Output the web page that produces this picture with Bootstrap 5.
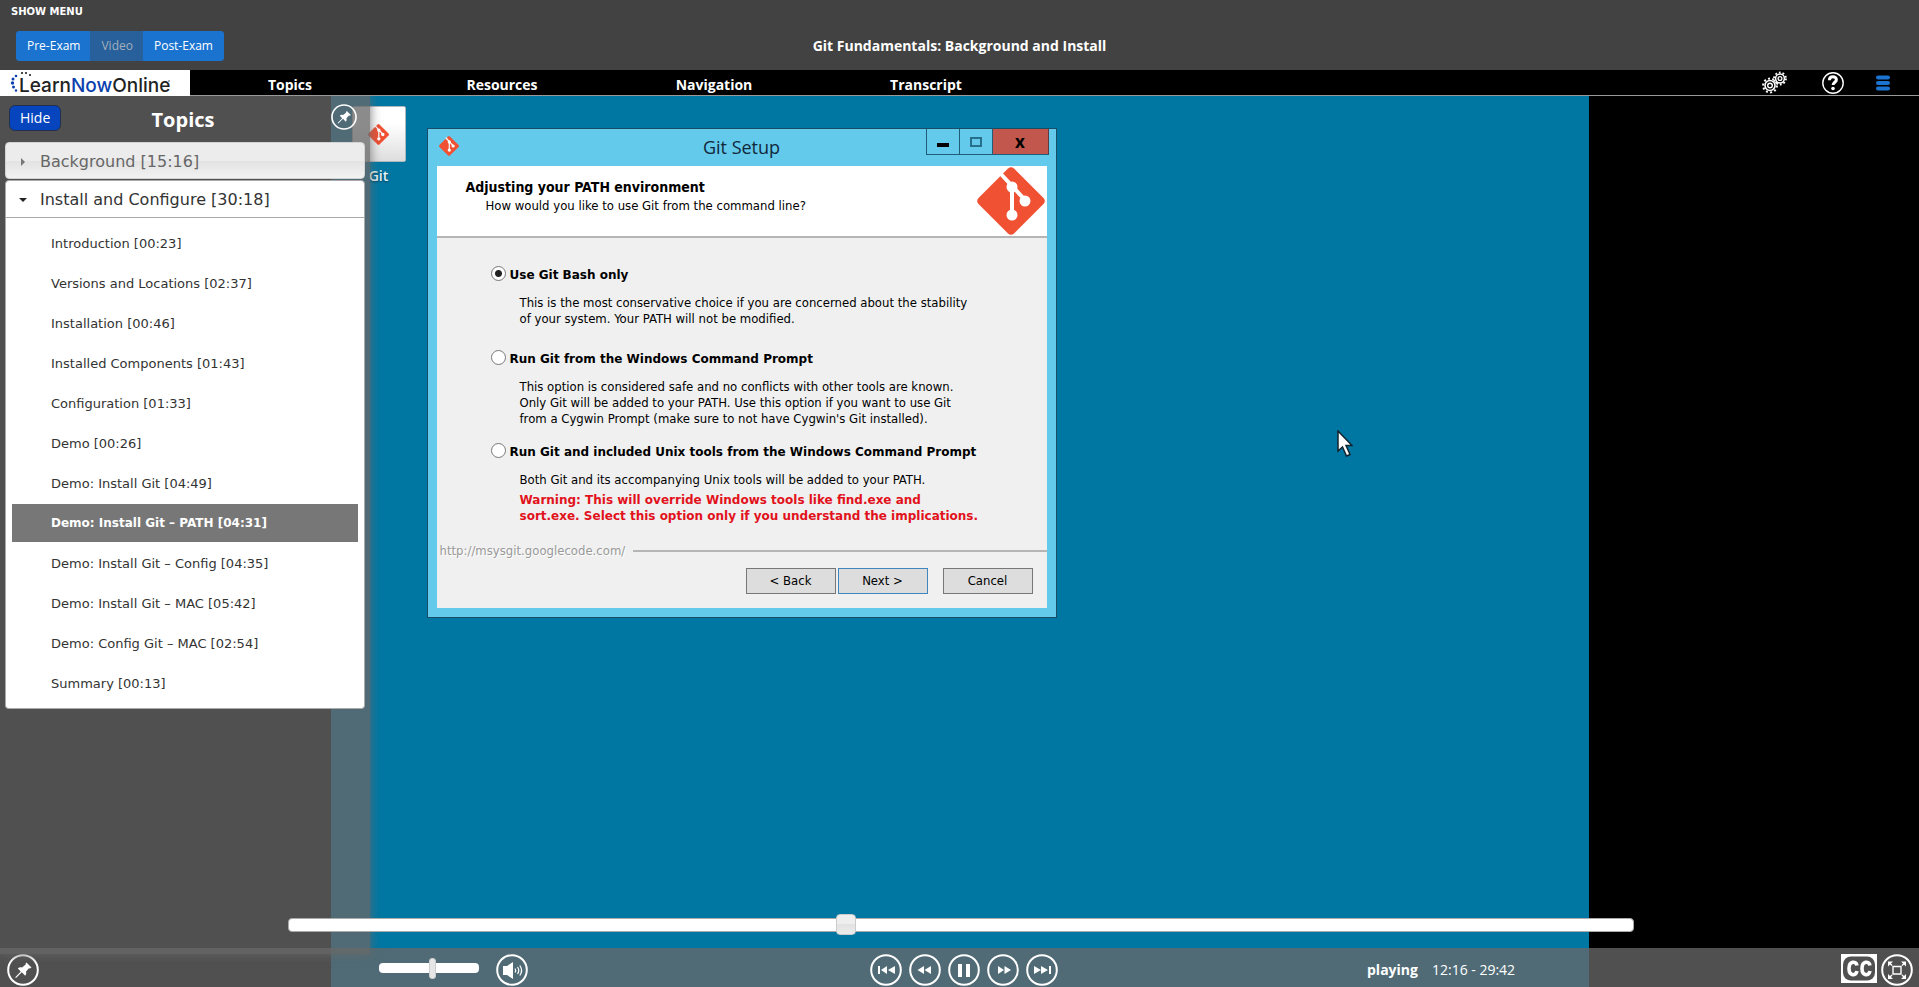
<!DOCTYPE html>
<html lang="en">
<head>
<meta charset="utf-8">
<meta name="viewport" content="width=device-width, initial-scale=1">
<title>Git Fundamentals: Background and Install</title>
<link href="https://cdn.jsdelivr.net/npm/bootstrap@5.3.0/dist/css/bootstrap.min.css" rel="stylesheet">
<style>
  body { font-family: "Open Sans", "Noto Sans", sans-serif; background: #000; color: #fff; font-size: 14px; }
  a { text-decoration: none; }
  svg { display: block; }

  /* top band */
  .top-band { background: #424242; height: 70px; flex: none; }
  .show-menu { font: bold 10px/12px "DejaVu Sans", sans-serif; color: #fff; padding: 6px 11px 0; width: fit-content; }
  .title-row { margin-top: 13px; padding: 0 16px; display: grid; grid-template-columns: 1fr auto 1fr; }
  .exam-tabs .btn { --bs-btn-bg: #1a73cf; --bs-btn-border-color: #1a73cf; --bs-btn-color: #fff;
    --bs-btn-disabled-bg: #27609a; --bs-btn-disabled-border-color: #27609a; --bs-btn-disabled-color: #a3afbb; --bs-btn-disabled-opacity: 1;
    --bs-btn-padding-x: 10px; --bs-btn-padding-y: 4px; --bs-btn-font-size: 12px; --bs-btn-line-height: 20px; --bs-btn-border-radius: 3px; }
  .course-title { font-size: 14px; line-height: 30px; font-weight: 700; margin: 0; }

  /* player navigation */
  .player-nav { height: 26px; flex: none; background: #000; border-bottom: 1px solid #999; }
  .brand-box { width: 190px; height: 26px; background: #fff; flex: none; }
  .brand-name { font: 500 19px/26px "Inter", sans-serif; fill: #222; }
  .nav-tabs-row { gap: 12px; }
  .nav-tabs-row a { flex: 0 1 200px; color: #fff; font-weight: 700; font-size: 14px; line-height: 30px; text-align: center; }
  .bare { background: none; border: 0; padding: 0; color: #fff; display: block; }
  .tools { gap: 31px; margin-right: 28px; }

  /* stage */
  .desktop { width: 66%; max-width: 1258px; background: #0077a3; }
  .desk-icon { left: 21px; top: 10px; width: 54px; font-size: 14px; font-weight: 600; color: #e6f5fa; line-height: 18px; text-shadow: 0 1px 2px #033b55; }
  .desk-icon .tile { height: 56px; margin-bottom: 5px; border-radius: 2px; border: 1px solid #aeb9bd; background: linear-gradient(#fff 30%, #dedede); }

  /* setup window */
  .setup { left: 96px; top: 32px; width: 630px; background: #64caeb; border: 1px solid #174d66; padding: 0 9px 9px; color: #000;
    font: 13px/16px "DejaVu Sans Condensed", "DejaVu Sans", sans-serif; }
  .setup-bar { height: 37px; display: grid; grid-template-columns: 1fr auto 1fr; }
  .setup-bar h2 { font: 18px/36px "Open Sans", sans-serif; color: #10283a; margin: 0; }
  .setup-bar > svg { margin: 7px 0 0 2px; }
  .win-btn { height: 26px; width: 33px; border: 1px solid #1f5c78; border-top: 0; border-right: 0; background: none; padding: 0; display: flex; align-items: center; justify-content: center; color: #000; }
  .win-close { width: 57px; background: #c2584d; border-right: 1px solid #5d3b45; font: bold 17px/20px "Noto Sans", sans-serif; }
  .win-group { margin-right: -2px; }
  .setup-head { background: #fff; height: 72px; border-bottom: 2px solid #b5b5b5; padding: 1px 2px 0 29px; }
  .setup-head h3 { font-size: 14px; line-height: 16px; font-weight: 700; margin: 12px 0 3px; }
  .setup-body { background: #f0f0f0; padding: 28px 8px 0 54px; }
  .opt-label { font: bold 12px/18px "DejaVu Sans", sans-serif; }
  .setup input[type=radio] { appearance: none; width: 15px; height: 15px; border: 1px solid #777; border-radius: 50%; background: #fff; margin: 0 4px 0 0; flex: none; }
  .setup input[type=radio]:checked { background: radial-gradient(circle, #222 0 3px, #fff 4px); }
  .opt-text { margin: 11px 0 0 29px; }
  .opt { padding-bottom: 23px; }
  .opt + .opt { padding-bottom: 16px; }
  .warn { color: #e2121c; font: bold 12px/16px "DejaVu Sans", sans-serif; }
  .setup-foot { background: #f0f0f0; padding: 3px 14px 14px 3px; }
  .setup-foot .site { color: #999; text-shadow: 1px 1px 0 #fff; }
  .setup-foot .rule { height: 2px; background: #b5b5b5; margin-right: -14px; }
  .foot-actions { margin-top: 9px; }
  .setup-foot button { width: 90px; height: 26px; padding: 0; color: #000; background: #ddd; border: 1px solid #777; }
  .setup-foot button.primary { border-color: #3f86bf; margin: 0 15px 0 2px; }
  .pointer-mark { left: 1006px; top: 334px; }

  /* overlays */
  .glass { background: rgba(104, 104, 104, .77); }
  .side { left: 0; top: 0; bottom: 33px; width: 370px; padding: 0 5px; box-shadow: 0 0 10px rgba(104, 104, 104, .9); }
  .side-head { height: 46px; display: grid; grid-template-columns: 1fr auto 1fr; padding: 0 8px 0 4px; }
  .hide-btn { background: #0645be; border: 1px solid #222f4d; border-radius: 6px; color: #fff; font-size: 14px; line-height: 18px; padding: 3px 10px; margin-top: 9px; }
  .side-head h2 { font-size: 20px; line-height: 48px; font-weight: 700; margin: 0; }
  .side-list { color: #333; font-family: "DejaVu Sans", sans-serif; }
  .sec { width: 100%; border: 1px solid #aaa; border-radius: 4px; display: flex; align-items: center; text-align: left; padding: 2px 14px 0; gap: 14px; font-size: 16px; line-height: 34px; color: #333; background: #fff; }
  .sec.closed { background: linear-gradient(#ececec 50%, #e2e2e2 50%, #f2f2f2); color: #666; border-color: #d3d3d3; margin-bottom: 1px; line-height: 33px; }
  .sec.opened { border-radius: 4px 4px 0 0; }
  .sec svg { width: 6px; flex: none; }
  .chapters { background: #fff; border: 1px solid #aaa; border-top: 0; border-radius: 0 0 4px 4px; padding: 6px; display: grid; gap: 2px; }
  .chapters a { display: block; color: #333; font-size: 13px; height: 38px; line-height: 39px; padding-left: 39px; }
  .chapters a.active { background: #777; color: #fff; font-weight: 700; font-size: 12px; }

  .seek-wrap { left: 15%; width: calc(70% + 3px); bottom: 52px; height: 21px; }
  input[type=range] { appearance: none; background: none; margin: 0; display: block; }
  .seek { width: 100%; height: 21px; }
  .seek::-webkit-slider-runnable-track { height: 14px; background: #fff; border: 1px solid #aaa; border-radius: 4px; }
  .seek::-webkit-slider-thumb { appearance: none; width: 20px; height: 21px; margin-top: -5px; border: 1px solid #ccc; border-radius: 4px; background: linear-gradient(#eee 48%, #e2e2e2 50%, #ececec); }
  input.volume { width: 100px; height: 22px; margin-top: 3px; }
  .volume::-webkit-slider-runnable-track { height: 10px; background: #fff; border-radius: 4px; }
  .volume::-webkit-slider-thumb { appearance: none; width: 7px; height: 21px; margin-top: -5px; border: 1px solid #ccc; border-radius: 3px; background: #e6e6e6; }
  .controls { left: 0; right: 0; bottom: 0; height: 39px; padding: 6px 6px 0 7px; display: grid; grid-template-columns: 1fr auto 1fr; }
  .vol-group { margin-left: 340px; gap: 17px; }
  .transport { gap: 7px; margin-left: 8px; }
  .status { margin-left: 309px; gap: 14px; font-size: 14px; line-height: 32px; }
</style>
</head>
<body class="d-flex flex-column vh-100 overflow-hidden">

<svg class="d-none" aria-hidden="true">
  <symbol id="git" viewBox="0 0 68 68">
    <path fill="#f05133" d="M31 1.5a4.500 4.500 0 0 1 6 0L66.500 31a4.500 4.500 0 0 1 0 6L37 66.500a4.500 4.500 0 0 1-6 0L1.500 37a4.500 4.500 0 0 1 0-6z"/>
    <g stroke="#fff" fill="#fff" stroke-width="4"><path fill="none" d="M23 6l12 13v29M35 19l14 15"/><circle cx="35" cy="20" r="3.500"/><circle cx="35" cy="48" r="3.500"/><circle cx="48" cy="34" r="3.500"/></g>
  </symbol>
  <symbol id="pin" viewBox="0 0 32 32">
    <circle cx="16" cy="16" r="14.800" fill="none" stroke="#fff" stroke-width="2"/>
    <path fill="#fff" d="M19.500 8.500l5 5-1.500 1-1-.2-3 3.200c.5 1.800.2 3-.8 4.200l-3.400-3.400L9 24l-.8-.7 5.600-5.900-3-3c1.200-1 2.500-1.300 4.200-.8l3.700-3.200-.1-1z"/>
  </symbol>
</svg>

<header class="top-band">
  <a href="#" class="show-menu d-block">SHOW MENU</a>
  <div class="title-row">
    <div><div class="btn-group exam-tabs">
      <button class="btn" type="button">Pre-Exam</button>
      <button class="btn" type="button" disabled>Video</button>
      <button class="btn" type="button">Post-Exam</button>
    </div></div>
    <h1 class="course-title">Git Fundamentals: Background and Install</h1>
  </div>
</header>

<nav class="player-nav d-flex" aria-label="Player">
  <a href="#" class="brand-box" aria-label="LearnNowOnline">
    <svg width="190" height="26" viewBox="0 0 190 26">
      <g fill="#0b3fae"><circle cx="16" cy="6" r="1.300"/><circle cx="13" cy="9" r="1.500"/><circle cx="12.500" cy="13" r="1.700"/><circle cx="13.500" cy="17" r="1.500"/><circle cx="16" cy="20.500" r="1.200"/></g>
      <g fill="#111"><circle cx="22" cy="3" r="1"/><circle cx="26" cy="3" r="1"/><circle cx="30" cy="5" r="1"/></g>
      <text x="19" y="21.500" class="brand-name">Learn<tspan fill="#0b3fae">Now</tspan>Online</text>
      <path d="M168 11h2" stroke="#555"/>
    </svg>
  </a>
  <div class="nav-tabs-row d-flex flex-fill">
    <a href="#">Topics</a><a href="#">Resources</a><a href="#">Navigation</a><a href="#">Transcript</a>
  </div>
  <div class="tools d-flex align-items-center">
    <button class="bare me-1" type="button" aria-label="Settings">
      <svg width="25" height="23" viewBox="0 0 25 23" fill="none" stroke="#fff">
        <circle cx="8" cy="14.500" r="5" stroke-width="1.600"/><circle cx="8" cy="14.500" r="6.900" stroke-width="2" stroke-dasharray="2 2.330"/><circle cx="8" cy="14.500" r="2.300" stroke-width="1.400"/>
        <circle cx="18" cy="7.500" r="4.400" stroke-width="1.500"/><circle cx="18" cy="7.500" r="6" stroke-width="1.800" stroke-dasharray="1.800 1.970"/><circle cx="18" cy="7.500" r="1.900" stroke-width="1.300"/>
      </svg>
    </button>
    <button class="bare" type="button" aria-label="Help">
      <svg width="22" height="22" viewBox="0 0 22 22" fill="none" stroke="#fff">
        <circle cx="11" cy="11" r="10.200" stroke-width="1.400"/>
        <path d="M7.400 8.300c0-4.600 7-4.500 7-.5 0 2.500-3.300 2.400-3.300 5.200" stroke-width="3"/><circle cx="11" cy="16.500" r="1.800" fill="#fff" stroke="none"/>
      </svg>
    </button>
    <button class="bare" type="button" aria-label="Menu">
      <svg width="16" height="16" viewBox="0 0 16 16" stroke="#1b74d1" stroke-width="4" stroke-linecap="round"><path d="M3 2.500h10M3 8h10M3 13.500h10"/></svg>
    </button>
  </div>
</nav>

<main class="position-relative flex-fill overflow-hidden">
  <div class="desktop position-relative mx-auto h-100">
    <div class="desk-icon position-absolute text-center">
      <div class="tile d-flex align-items-center justify-content-center"><svg width="21" height="21"><use href="#git"/></svg></div>
      Git
    </div>

    <section class="setup position-absolute" aria-label="Git Setup">
      <div class="setup-bar">
        <svg width="20" height="20"><use href="#git"/></svg>
        <h2>Git Setup</h2>
        <div class="win-group d-flex justify-content-end">
          <button class="win-btn" type="button" aria-label="Minimize"><svg width="12" height="12"><path d="M0 7h12v4H0z"/></svg></button>
          <button class="win-btn" type="button" aria-label="Maximize"><svg width="12" height="10" fill="none" stroke="#27708c" stroke-width="2"><path d="M1 1h10v8H1z"/></svg></button>
          <button class="win-btn win-close" type="button" aria-label="Close">x</button>
        </div>
      </div>
      <div class="setup-head d-flex justify-content-between align-items-start">
        <div>
          <h3>Adjusting your PATH environment</h3>
          <div class="ps-3 ms-1">How would you like to use Git from the command line?</div>
        </div>
        <svg width="68" height="68"><use href="#git"/></svg>
      </div>
      <div class="setup-body">
        <div class="opt">
          <label class="opt-label d-flex"><input type="radio" name="path" checked>Use Git Bash only</label>
          <div class="opt-text">This is the most conservative choice if you are concerned about the stability<br>of your system. Your PATH will not be modified.</div>
        </div>
        <div class="opt">
          <label class="opt-label d-flex"><input type="radio" name="path">Run Git from the Windows Command Prompt</label>
          <div class="opt-text">This option is considered safe and no conflicts with other tools are known.<br>Only Git will be added to your PATH. Use this option if you want to use Git<br>from a Cygwin Prompt (make sure to not have Cygwin's Git installed).</div>
        </div>
        <div class="opt">
          <label class="opt-label d-flex"><input type="radio" name="path">Run Git and included Unix tools from the Windows Command Prompt</label>
          <div class="opt-text">Both Git and its accompanying Unix tools will be added to your PATH.
            <div class="warn mt-1">Warning: This will override Windows tools like find.exe and<br>sort.exe. Select this option only if you understand the implications.</div>
          </div>
        </div>
      </div>
      <div class="setup-foot">
        <div class="d-flex align-items-center gap-2"><span class="site">http://msysgit.googlecode.com/</span><span class="rule flex-fill"></span></div>
        <div class="foot-actions d-flex justify-content-end">
          <button type="button">&lt; Back</button><button type="button" class="primary">Next &gt;</button><button type="button">Cancel</button>
        </div>
      </div>
    </section>

    <svg class="pointer-mark position-absolute" width="16" height="28" viewBox="0 0 16 28"><path d="M1 1v20l4.500-4 4 9 3.500-1.500-4-9h6z" fill="#fff" stroke="#13242e" stroke-width="1.500"/></svg>
  </div>

  <div class="controls glass position-absolute">
    <div class="d-flex align-items-start">
      <button class="bare" type="button" aria-label="Pin controls"><svg width="32" height="32"><use href="#pin"/></svg></button>
      <div class="vol-group d-flex align-items-start">
        <input class="volume" type="range" aria-label="Volume" min="0" max="100" value="54">
        <button class="bare" type="button" aria-label="Mute">
          <svg width="32" height="32" viewBox="0 0 32 32" fill="none" stroke="#fff"><circle cx="16" cy="16" r="14.800" stroke-width="2"/><path fill="#fff" stroke="none" d="M7 12h4l6-4v17l-6-4H7z"/><path stroke-width="1.200" d="M19 14.500q1.500 2 0 4M21.500 13q2.500 3.500 0 7M23.800 11.500q3.600 5 0 10"/></svg>
        </button>
      </div>
    </div>
    <div class="transport d-flex align-items-start">
      <button class="bare" type="button" aria-label="Previous"><svg width="32" height="32" viewBox="0 0 32 32" fill="#fff"><circle cx="16" cy="16" r="14.800" fill="none" stroke="#fff" stroke-width="2"/><path d="M8 12h2v8H8zM11 16l6-4v8zM18 16l7-4v8z"/></svg></button>
      <button class="bare" type="button" aria-label="Rewind"><svg width="32" height="32" viewBox="0 0 32 32" fill="#fff"><circle cx="16" cy="16" r="14.800" fill="none" stroke="#fff" stroke-width="2"/><path d="M8.500 16l6.500-4v8zM15.500 16l6.500-4v8z"/></svg></button>
      <button class="bare" type="button" aria-label="Pause"><svg width="32" height="32" viewBox="0 0 32 32" fill="#fff"><circle cx="16" cy="16" r="14.800" fill="none" stroke="#fff" stroke-width="2"/><path d="M10 10h4v13h-4zM18 10h4v13h-4z"/></svg></button>
      <button class="bare" type="button" aria-label="Forward"><svg width="32" height="32" viewBox="0 0 32 32" fill="#fff"><circle cx="16" cy="16" r="14.800" fill="none" stroke="#fff" stroke-width="2"/><path d="M17 16l-6-4v8zM24 16l-6.500-4v8z"/></svg></button>
      <button class="bare" type="button" aria-label="Next"><svg width="32" height="32" viewBox="0 0 32 32" fill="#fff"><circle cx="16" cy="16" r="14.800" fill="none" stroke="#fff" stroke-width="2"/><path d="M15 16l-7-4v8zM22 16l-7-4v8zM23 12h2v8h-2z"/></svg></button>
    </div>
    <div class="d-flex align-items-start">
      <div class="status d-flex flex-fill"><strong>playing</strong><span>12:16 - 29:42</span></div>
      <button class="bare" type="button" aria-label="Closed captions">
        <svg width="36" height="29" viewBox="0 0 36 29"><path fill="#fff" d="M0 0h36v29H0z"/><rect x="2" y="2.500" width="32" height="24" rx="8" fill="#505050"/><g fill="none" stroke="#fff" stroke-width="3.600"><path d="M16 11.500c-1-5-8-4.500-8 3s7 8 8 2.500M29 11.500c-1-5-8-4.500-8 3s7 8 8 2.500"/></g></svg>
      </button>
      <button class="bare ms-1" type="button" aria-label="Full screen">
        <svg width="32" height="32" viewBox="0 0 32 32" fill="none" stroke="#fff"><circle cx="16" cy="16" r="14.800" stroke-width="2"/><path stroke-width="1.400" d="M12 12.500h8v7.500h-8zM11 11.500L8 8.500M21 11.500l3-3M11 21l-3 3M21 21l3 3"/><path fill="#fff" stroke="none" d="M7 7.500h5l-5 5zM25 7.500h-5l5 5zM7 25h5l-5-5zM25 25h-5l5-5z"/></svg>
      </button>
    </div>
  </div>

  <aside class="side glass position-absolute">
    <div class="side-head">
      <div><button class="hide-btn" type="button">Hide</button></div>
      <h2>Topics</h2>
      <button class="bare ms-auto mt-2 align-self-start" type="button" aria-label="Pin topics"><svg width="26" height="26"><use href="#pin"/></svg></button>
    </div>
    <div class="side-list">
      <button class="sec closed" type="button"><svg height="8" viewBox="0 0 6 8"><path d="M1 0l4 4-4 4z" fill="#777"/></svg>Background [15:16]</button>
      <button class="sec opened" type="button" aria-expanded="true"><svg height="8" viewBox="0 0 6 8" overflow="visible"><path d="M-1 2h8L3 6z" fill="#222"/></svg>Install and Configure [30:18]</button>
      <div class="chapters">
        <a href="#">Introduction [00:23]</a>
        <a href="#">Versions and Locations [02:37]</a>
        <a href="#">Installation [00:46]</a>
        <a href="#">Installed Components [01:43]</a>
        <a href="#">Configuration [01:33]</a>
        <a href="#">Demo [00:26]</a>
        <a href="#">Demo: Install Git [04:49]</a>
        <a href="#" class="active" aria-current="true">Demo: Install Git – PATH [04:31]</a>
        <a href="#">Demo: Install Git – Config [04:35]</a>
        <a href="#">Demo: Install Git – MAC [05:42]</a>
        <a href="#">Demo: Config Git – MAC [02:54]</a>
        <a href="#">Summary [00:13]</a>
      </div>
    </div>
  </aside>

  <div class="seek-wrap position-absolute">
    <input class="seek" type="range" aria-label="Seek" min="0" max="1782" value="736">
  </div>
</main>

<script src="https://cdn.jsdelivr.net/npm/bootstrap@5.3.0/dist/js/bootstrap.bundle.min.js"></script>
</body>
</html>
